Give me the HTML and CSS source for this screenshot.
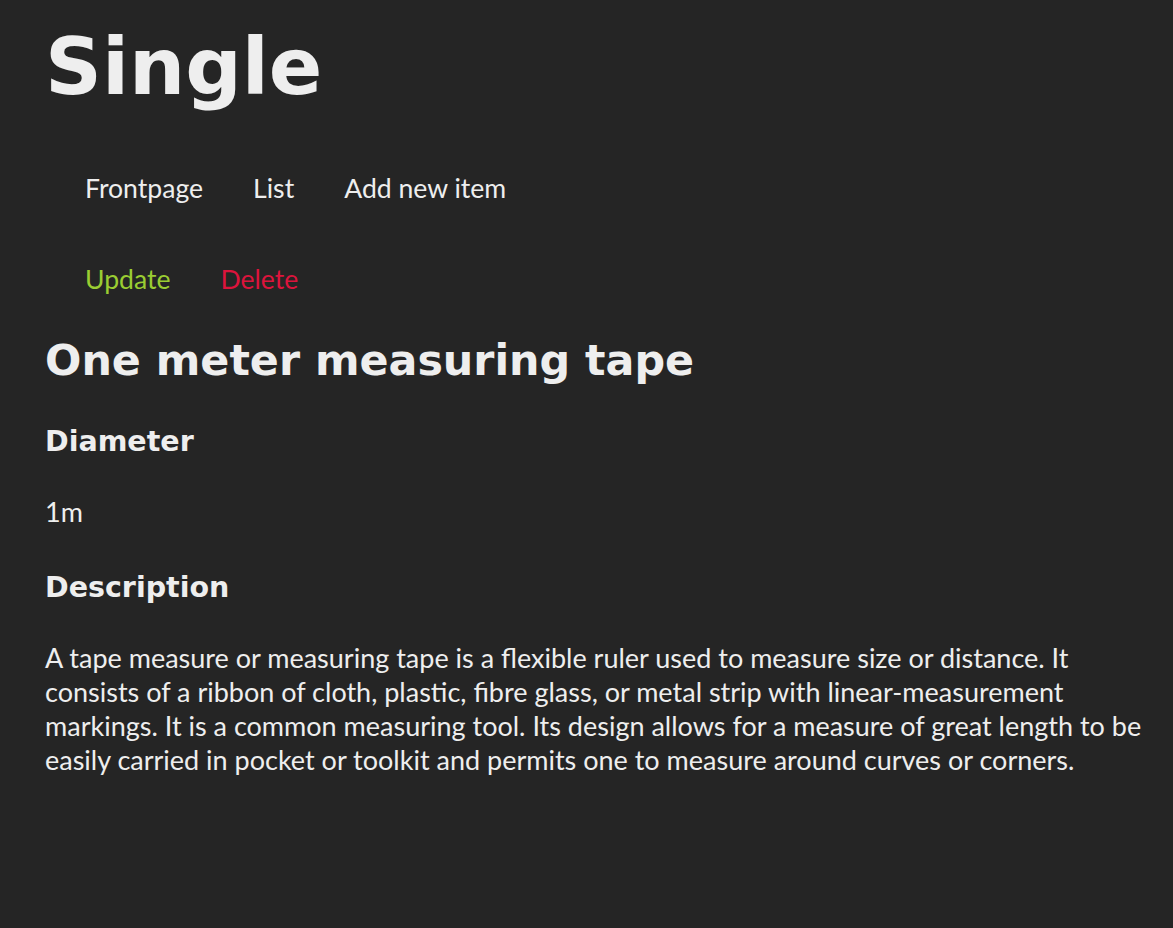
FILE: index.html
```html
<!DOCTYPE html>
<html lang="en">
<head>
<meta charset="utf-8">
<title>Single</title>
<link rel="stylesheet" href="styles.css">
</head>
<body>
<main class="page">
  <h1 class="title">Single</h1>
  <ul class="nav">
    <li><a class="nav-link" href="#">Frontpage</a></li>
    <li><a class="nav-link" href="#">List</a></li>
    <li><a class="nav-link" href="#">Add new item</a></li>
  </ul>
  <ul class="nav nav-actions">
    <li><a class="nav-link update" href="#">Update</a></li>
    <li><a class="nav-link delete" href="#">Delete</a></li>
  </ul>
  <h2 class="item-name">One meter measuring tape</h2>
  <h3 class="field-label">Diameter</h3>
  <p class="field-value">1m</p>
  <h3 class="field-label field-label-desc">Description</h3>
  <p class="field-value description">A tape measure or measuring tape is a flexible ruler used to measure size or distance. It consists of a ribbon of cloth, plastic, fibre glass, or metal strip with linear-measurement markings. It is a common measuring tool. Its design allows for a measure of great length to be easily carried in pocket or toolkit and permits one to measure around curves or corners.</p>
</main>
</body>
</html>
```

FILE: styles.css
```css
html, body {
  margin: 0;
  background: #252525;
  color: #eeeeee;
}

body {
  font-family: "Lato", "Open Sans", sans-serif;
  font-size: 27px;
  line-height: 34px;
}

.page {
  padding: 20px 13px 40px 45px;
}

.title {
  margin: 0;
  font-family: "DejaVu Sans", Verdana, sans-serif;
  font-weight: bold;
  font-size: 79px;
  line-height: 95px;
}

.nav {
  list-style: none;
  margin: 56px 0 0;
  padding: 0 0 0 40px;
  display: flex;
  gap: 50px;
  font-size: 26.6px;
}

.nav-actions {
  margin-top: 57px;
}

.nav-link {
  color: #eeeeee;
  text-decoration: none;
}

.update {
  color: #9acd32;
}

.delete {
  color: #dc143c;
}

.item-name {
  margin: 39px 0 0;
  font-family: "DejaVu Sans", Verdana, sans-serif;
  font-weight: bold;
  font-size: 42.8px;
  line-height: 50px;
}

.field-label {
  margin: 40px 0 0;
  font-family: "DejaVu Sans", Verdana, sans-serif;
  font-weight: bold;
  font-size: 28.5px;
  line-height: 33px;
}

.field-label-desc {
  margin-top: 42px;
}

.field-value {
  margin: 37px 0 0;
}
```
